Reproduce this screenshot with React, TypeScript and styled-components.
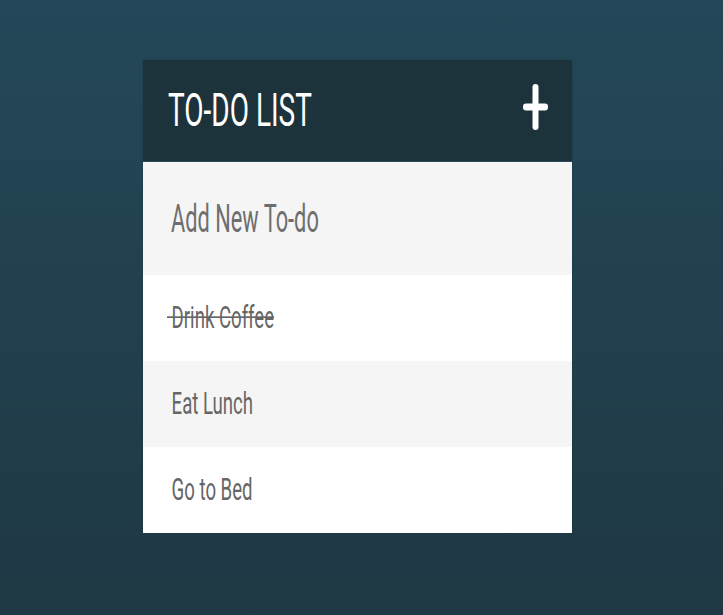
import React from "react";
import styled, { createGlobalStyle } from "styled-components";

const Global = createGlobalStyle`
  html, body { margin: 0; padding: 0; }
  body {
    width: 723px;
    height: 615px;
    overflow: hidden;
    background: linear-gradient(to bottom, #244859 0%, #1f3844 100%);
    font-family: Roboto, "Liberation Sans", sans-serif;
  }
`;

const Page = styled.div`
  height: 615px;
  padding: 60px 0 0 143px;
  box-sizing: border-box;
`;

const Card = styled.div`
  width: 429px;
  display: flex;
  flex-direction: column;
  box-shadow: 0 0 2px rgba(0, 0, 0, 0.15);
`;

const Header = styled.div`
  height: 102px;
  background: #1c333c;
  border-bottom: 1px solid #2e4c57;
  display: flex;
  align-items: center;
  justify-content: space-between;
  padding: 0 24px 0 25px;
  box-sizing: border-box;
`;

const Stretch = styled.span<{ $scale?: number }>`
  display: inline-block;
  transform: scaleY(${(p) => p.$scale ?? 1.72});
  transform-origin: center;
  white-space: pre;
`;

const Title = styled.h1`
  margin: 0;
  font-weight: 400;
  font-size: 28px;
  color: #ffffff;
  line-height: 1;
`;

const AddButton = styled.button`
  border: none;
  background: none;
  padding: 0;
  display: flex;
  margin-top: -8px;
  cursor: pointer;
`;

const InputRow = styled.div`
  height: 113px;
  background: #f5f5f5;
  display: flex;
  align-items: center;
  padding-left: 28px;
  font-size: 21.8px;
  color: #6e6e6e;
`;

const List = styled.ul`
  list-style: none;
  margin: 0;
  padding: 0;
`;

const Item = styled.li<{ $alt: boolean; $done: boolean }>`
  height: 86px;
  background: ${(p) => (p.$alt ? "#f5f5f5" : "#ffffff")};
  display: flex;
  align-items: center;
  padding-left: 24px;
  font-size: 18.6px;
  color: #666666;
  text-decoration: ${(p) => (p.$done ? "line-through" : "none")};
`;

const PlusIcon = () => (
  <svg width="25" height="46" viewBox="0 0 25 46">
    <rect x="9.5" y="0" width="6" height="46" rx="3" fill="#ffffff" />
    <rect x="0" y="19.5" width="25" height="7" rx="3" fill="#ffffff" />
  </svg>
);

const todos = [
  { text: "Drink Coffee", done: true },
  { text: "Eat Lunch", done: false },
  { text: "Go to Bed", done: false },
];

export default function App() {
  return (
    <>
      <Global />
      <Page>
        <Card>
          <Header>
            <Title>
              <Stretch $scale={1.68}>TO-DO LIST</Stretch>
            </Title>
            <AddButton aria-label="Add">
              <PlusIcon />
            </AddButton>
          </Header>
          <InputRow>
            <Stretch $scale={1.78}>Add New To-do</Stretch>
          </InputRow>
          <List>
            {todos.map((t, i) => (
              <Item key={t.text} $alt={i % 2 === 1} $done={t.done}>
                <Stretch $scale={1.68}>{" " + t.text}</Stretch>
              </Item>
            ))}
          </List>
        </Card>
      </Page>
    </>
  );
}
